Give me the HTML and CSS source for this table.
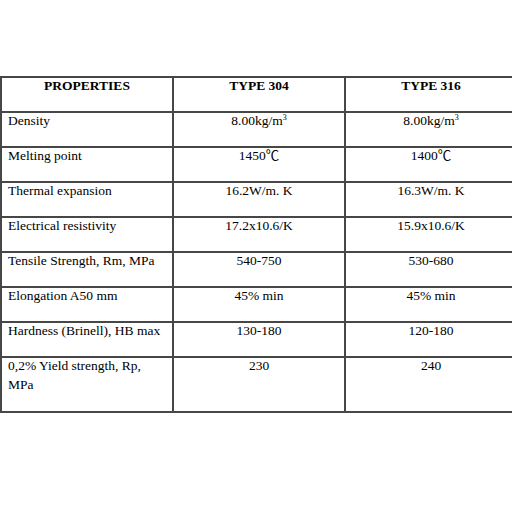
FILE: index.html
```html
<!DOCTYPE html>
<html>
<head>
<meta charset="utf-8">
<link rel="stylesheet" href="styles.css">
</head>
<body>
<div class="page">
<table class="props">
  <colgroup><col class="c"><col class="c"><col class="c"></colgroup>
  <tr class="row head">
    <th><div class="v">PROPERTIES</div></th><th><div class="v">TYPE 304</div></th><th><div class="v">TYPE 316</div></th>
  </tr>
  <tr class="row"><td class="name"><div class="v">Density</div></td><td><div class="v">8.00kg/m<sup>3</sup></div></td><td><div class="v">8.00kg/m<sup>3</sup></div></td></tr>
  <tr class="row"><td class="name"><div class="v">Melting point</div></td><td><div class="v">1450℃</div></td><td><div class="v">1400℃</div></td></tr>
  <tr class="row"><td class="name"><div class="v">Thermal expansion</div></td><td><div class="v">16.2W/m. K</div></td><td><div class="v">16.3W/m. K</div></td></tr>
  <tr class="row"><td class="name"><div class="v">Electrical resistivity</div></td><td><div class="v">17.2x10.6/K</div></td><td><div class="v">15.9x10.6/K</div></td></tr>
  <tr class="row"><td class="name"><div class="v">Tensile Strength, Rm, MPa</div></td><td><div class="v">540-750</div></td><td><div class="v">530-680</div></td></tr>
  <tr class="row"><td class="name"><div class="v">Elongation A50 mm</div></td><td><div class="v">45% min</div></td><td><div class="v">45% min</div></td></tr>
  <tr class="row"><td class="name"><div class="v">Hardness (Brinell), HB max</div></td><td><div class="v">130-180</div></td><td><div class="v">120-180</div></td></tr>
  <tr class="row tall"><td class="name"><div class="v">0,2% Yield strength, Rp,<br>MPa</div></td><td><div class="v">230</div></td><td><div class="v">240</div></td></tr>
</table>
</div>
</body>
</html>
```
FILE: styles.css
```css
html, body {
  margin: 0;
  padding: 0;
  background: #ffffff;
  overflow: hidden;
}
.page {
  width: 512px;
  height: 512px;
  overflow: hidden;
  padding-top: 76px;
  box-sizing: border-box;
}
.props {
  border-collapse: collapse;
  width: 516px;
  table-layout: fixed;
  font-family: "Liberation Serif", "Times New Roman", "Noto Sans CJK SC", serif;
  font-size: 13.5px;
  line-height: 19px;
  color: #000;
}
.props col.c {
  width: 172px;
}
.props th, .props td {
  border: 2px solid #474747;
  vertical-align: top;
  text-align: center;
  padding: 0 6px;
}
.props th {
  font-weight: bold;
}
.props td.name {
  text-align: left;
}
.v {
  margin-top: -2px;
}
.row {
  height: 35px;
}
.row.tall {
  height: 55px;
}
sup {
  font-size: 8px;
  line-height: 0;
  vertical-align: 5px;
}
```
